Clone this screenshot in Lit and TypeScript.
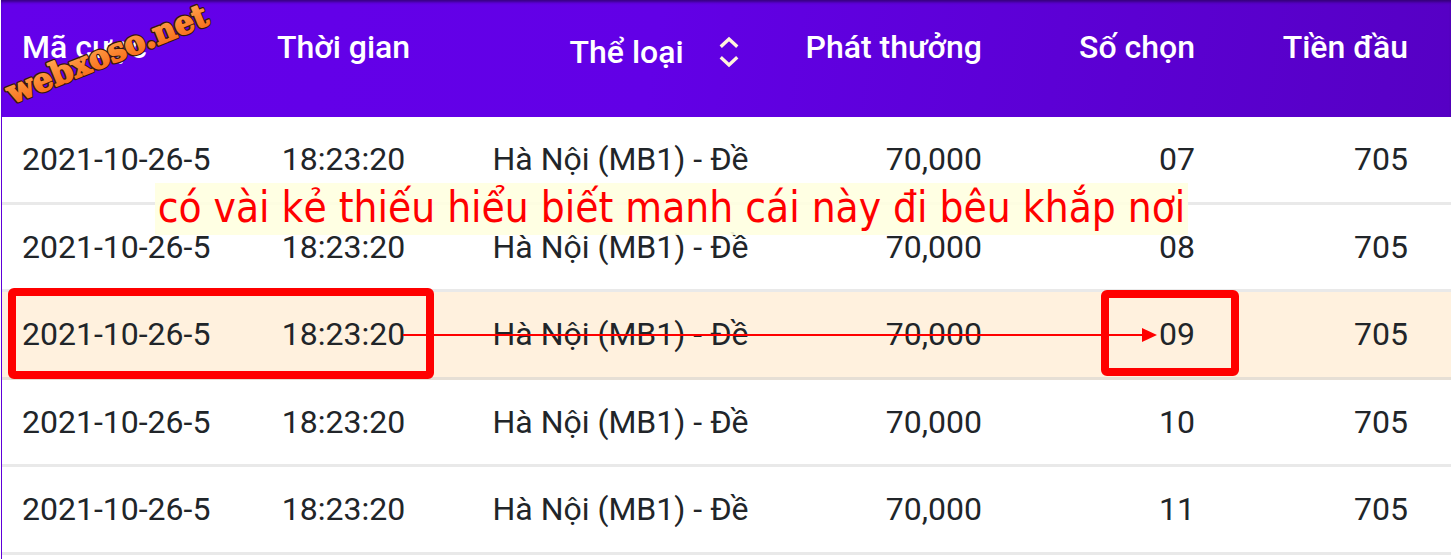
import { LitElement, html, css } from "lit";
import { customElement } from "lit/decorators.js";

const rows = ["07", "08", "09", "10", "11"];

@customElement("app-root")
export class AppRoot extends LitElement {
  static styles = css`
    :host { display: block; width: 1451px; height: 559px; position: relative; overflow: hidden; background: #fff; font-family: Roboto, sans-serif; }
    .table { display: flex; flex-direction: column; margin-left: 1px; border-left: 1px solid #5f00d8; height: 559px; box-sizing: border-box; }
    .grid { display: grid; grid-template-columns: 20px 231.500px 180px 314.500px 234px 213px 213px 43px; }
    .head { height: 117px; box-sizing: border-box; margin-left: -1px; padding-left: 1px; background: linear-gradient(100deg, #6400ea 0%, #6200e6 45%, #5600c4 100%); box-shadow: inset 0 3px 3px -1px rgba(40,0,90,.75); color: #fff; font-size: 32px; font-weight: 500; line-height: 38px; padding-top: 28px; }
    .row { height: 87.5px; box-sizing: border-box; border-bottom: 3px solid #e9e9e9; align-items: center; color: #212529; font-size: 32px; line-height: 38px; }
    .row.hl { background: #fff1de; border-bottom-color: #e6dfd5; }
    .c1 { grid-column: 2; }
    .c2 { grid-column: 3; text-align: center; }
    .c3 { grid-column: 4; white-space: nowrap; padding-left: 59px; }
    .c4 { grid-column: 5; text-align: right; }
    .c5 { grid-column: 6; text-align: right; }
    .c6 { grid-column: 7; text-align: right; }
    .sort { display: flex; align-items: center; align-self: start; gap: 34px; padding-left: 136px; padding-top: 5px; white-space: nowrap; }
    .sort svg { flex: none; }
    .note { position: absolute; left: 155px; top: 183px; width: 1033px; height: 52px; background: rgba(255,255,224,.9); color: #f00; font-family: "DejaVu Sans", sans-serif; font-stretch: condensed; font-size: 42px; line-height: 49px; white-space: nowrap; text-align: center; }
    .overlay { position: absolute; left: 0; top: 0; pointer-events: none; }
    .brand { font-family: "DejaVu Serif", serif; font-weight: 700; font-size: 32px; stroke-linejoin: round; }
    .brand-edge { stroke: #33180a; stroke-width: 4px; fill: #33180a; }
    .brand-face { stroke: url(#g); stroke-width: 1.5px; fill: url(#g); }
  `;

  render() {
    return html`
      <div class="table">
        <div class="grid head">
          <div class="c1">Mã cược</div>
          <div class="c2">Thời gian</div>
          <div class="c3 sort">Thể loại
            <svg width="22" height="32" viewBox="0 0 22 32" fill="none" stroke="#fff3dc" stroke-width="3.4" stroke-linecap="square"><path d="M4 9.500 11 3l7 6.500M4 22.500 11 29l7-6.500"/></svg>
          </div>
          <div class="c4">Phát thưởng</div>
          <div class="c5">Số chọn</div>
          <div class="c6">Tiền đầu</div>
        </div>
        ${rows.map((n, i) => html`
          <div class="grid row ${i === 2 ? "hl" : ""}">
            <div class="c1">2021-10-26-5</div>
            <div class="c2">18:23:20</div>
            <div class="c3">Hà Nội (MB1) - Đề</div>
            <div class="c4">70,000</div>
            <div class="c5">${n}</div>
            <div class="c6">705</div>
          </div>`)}
      </div>
      <div class="note">có vài kẻ thiếu hiểu biết manh cái này đi bêu khắp nơi</div>
      <svg class="overlay" width="1451" height="559" fill="none">
        <defs>
          <linearGradient id="g" gradientUnits="userSpaceOnUse" x1="0" y1="-26" x2="0" y2="2">
            <stop offset="0" stop-color="#ffa54f"/>
            <stop offset="1" stop-color="#f8701c"/>
          </linearGradient>
        </defs>
        <rect x="12" y="292" width="418" height="83" rx="2" stroke="#f00" stroke-width="8"/>
        <rect x="1105" y="294" width="130" height="78" rx="2" stroke="#f00" stroke-width="8"/>
        <path d="M403 335H1145" stroke="#f00" stroke-width="2"/>
        <path d="M1142 328l15 7-15 7z" fill="#f00"/>
        <g transform="translate(12 104) rotate(-22)" aria-hidden="true">
          <text class="brand brand-edge" textLength="214" lengthAdjust="spacingAndGlyphs">webxoso.net</text>
        </g>
        <g transform="translate(12 104) rotate(-22)">
          <text class="brand brand-face" textLength="214" lengthAdjust="spacingAndGlyphs">webxoso.net</text>
        </g>
      </svg>
    `;
  }
}
